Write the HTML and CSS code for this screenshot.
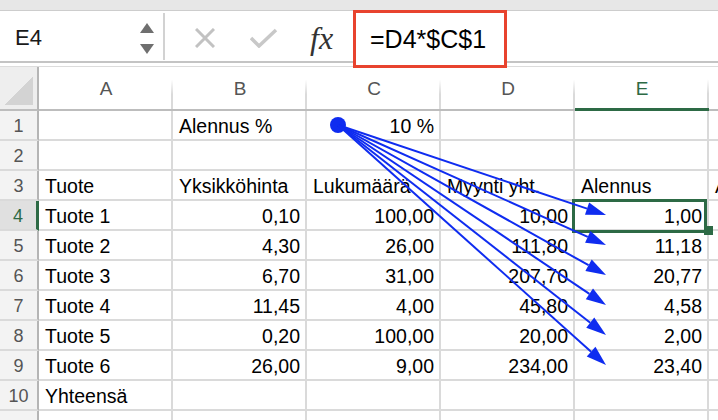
FILE: index.html
```html
<!DOCTYPE html>
<html lang="fi">
<head>
    <meta charset="UTF-8">
    <meta name="viewport" content="width=device-width, initial-scale=1.0">
    <title>Alennus</title>
    <link rel="stylesheet" href="styles.css">
</head>
<body>
<div class="page">
    <div class="top-strip"></div>

    <div class="formula-bar">
        <div class="name-box">
            <span>E4</span>
            <span class="spinner">
                <svg width="14" height="10" viewBox="0 0 14 10"><polygon points="7,0 14,10 0,10" fill="#6f6f6f"/></svg>
                <svg width="14" height="10" viewBox="0 0 14 10"><polygon points="0,0 14,0 7,10" fill="#6f6f6f"/></svg>
            </span>
        </div>
        <div class="sep"></div>
        <svg class="btn-cancel" width="20" height="20" viewBox="0 0 20 20">
            <path d="M1 1 L19 19 M19 1 L1 19" stroke="#c2c2c2" stroke-width="3" fill="none"/>
        </svg>
        <svg class="btn-enter" width="28" height="20" viewBox="0 0 28 20">
            <path d="M1 10 L9 18 L26 2" stroke="#c8c8c8" stroke-width="3.5" fill="none"/>
        </svg>
        <span class="fx">fx</span>
        <div class="formula-input">=D4*$C$1</div>
    </div>
    <div class="gap"></div>

    <div class="sheet" id="sheet"></div>

    <svg class="arrows" id="arrows" width="718" height="420"></svg>
</div>

<script>
    const cols = ['A', 'B', 'C', 'D', 'E', 'F'];
    const data = [
        ['', 'Alennus %', '10 %', '', '', ''],
        ['', '', '', '', '', ''],
        ['Tuote', 'Yksikköhinta', 'Lukumäärä', 'Myynti yht.', 'Alennus', 'Alennus %'],
        ['Tuote 1', '0,10', '100,00', '10,00', '1,00', ''],
        ['Tuote 2', '4,30', '26,00', '111,80', '11,18', ''],
        ['Tuote 3', '6,70', '31,00', '207,70', '20,77', ''],
        ['Tuote 4', '11,45', '4,00', '45,80', '4,58', ''],
        ['Tuote 5', '0,20', '100,00', '20,00', '2,00', ''],
        ['Tuote 6', '26,00', '9,00', '234,00', '23,40', ''],
        ['Yhteensä', '', '', '', '', ''],
        ['', '', '', '', '', '']
    ];

    let html = '<div class="corner"><div class="corner-tri"></div></div>';
    cols.forEach(c => {
        html += `<div class="col-head${c === 'E' ? ' active' : ''}">${c === 'F' ? '' : c}</div>`;
    });
    data.forEach((row, i) => {
        const n = i + 1;
        // rivi 11 jää ikkunan alareunan alle, vain viivat näkyvät
        html += `<div class="row-head${n === 4 ? ' active' : ''}">${n <= 10 ? n : ''}</div>`;
        row.forEach((v, j) => {
            const num = v !== '' && /^[\d,\s%]+$/.test(v);
            const sel = n === 4 && j === 4;
            html += `<div class="cell${num ? ' num' : ''}${sel ? ' selected' : ''}">${v}`
                + (sel ? '<div class="selection"><div class="fill-handle"></div></div>' : '')
                + '</div>';
        });
    });
    document.getElementById('sheet').innerHTML = html;

    // jäljitysnuolet C1 -> E4:E9
    const from = { x: 338, y: 125 };
    const headLen = 20, headHalf = 6.5;
    let svg = `<circle cx="${from.x}" cy="${from.y}" r="8" fill="#0f2cf0"/>`;
    for (let k = 0; k < 6; k++) {
        const tip = { x: 606, y: 215 + 30 * k };
        const dx = tip.x - from.x, dy = tip.y - from.y;
        const len = Math.hypot(dx, dy);
        const ux = dx / len, uy = dy / len;
        const bx = tip.x - headLen * ux, by = tip.y - headLen * uy;
        svg += `<line x1="${from.x}" y1="${from.y}" x2="${bx}" y2="${by}" stroke="#0f2cf0" stroke-width="2"/>`;
        svg += `<polygon points="${tip.x},${tip.y} ${bx - headHalf * uy},${by + headHalf * ux} ${bx + headHalf * uy},${by - headHalf * ux}" fill="#0f2cf0"/>`;
    }
    document.getElementById('arrows').innerHTML = svg;
</script>
</body>
</html>
```

FILE: styles.css
```css
body {
    margin: 0;
    font-family: "Liberation Sans", Arial, sans-serif;
    background: #fff;
    overflow: hidden;
}
.page {
    position: relative;
    width: 718px;
    height: 420px;
    overflow: hidden;
}
.top-strip {
    height: 10px;
    background: #e7e7e7;
    border-bottom: 1px solid #cdcdcd;
}
.formula-bar {
    display: flex;
    align-items: center;
    height: 52px;
    box-sizing: border-box;
    padding-top: 4px;
    border-bottom: 2px solid #c4c4c4;
}
.name-box {
    width: 163px;
    height: 100%;
    box-sizing: border-box;
    display: flex;
    align-items: center;
    justify-content: space-between;
    padding: 0 9px 0 15px;
    font-size: 22px;
    color: #1a1a1a;
}
.spinner {
    display: flex;
    flex-direction: column;
    gap: 11px;
}
.spinner svg {
    display: block;
}
.sep {
    width: 2px;
    align-self: stretch;
    margin: -2px 0 1px;
    background: #d2d2d2;
}
.btn-cancel {
    margin-left: 30px;
}
.btn-enter {
    margin-left: 35px;
}
.fx {
    margin-left: 32px;
    width: 30px;
    font: italic 32px "Liberation Serif", "Times New Roman", serif;
    color: #333;
}
.formula-input {
    align-self: flex-start;
    margin-top: -5px;
    margin-left: 13px;
    width: 154px;
    height: 58px;
    box-sizing: border-box;
    border: 3px solid #e8432e;
    padding-left: 14px;
    font-size: 25px;
    line-height: 52px;
    color: #000;
    background: #fff;
    position: relative;
    z-index: 2;
}
.gap {
    height: 3px;
}
.sheet {
    display: grid;
    grid-template-columns: 39px repeat(6, 134px);
    grid-template-rows: 44px;
    grid-auto-rows: 30px;
    border-top: 1px solid #dcdcdc;
}
.corner {
    display: flex;
    justify-content: flex-end;
    align-items: flex-end;
    padding: 0 4px 4px 0;
    background: #eeeeee;
    border-right: 2px solid #b5b5b5;
    border-bottom: 2px solid #bdbdbd;
}
.corner-tri {
    width: 29px;
    height: 29px;
    background: linear-gradient(to top left, #d3d3d3 50%, transparent 50%);
}
.col-head {
    box-sizing: border-box;
    padding-top: 12px;
    line-height: 20px;
    text-align: center;
    font-size: 19px;
    color: #555;
    border-bottom: 2px solid #bdbdbd;
    background: linear-gradient(to bottom, rgba(218, 218, 218, 0) 30%, #dadada 65%) right top / 2px 100% no-repeat;
}
.col-head.active {
    color: #2d6a45;
    border-bottom: 3px solid #2d6a45;
}
.row-head {
    background: #f3f3f3;
    border-right: 2px solid #b5b5b5;
    border-bottom: 2px solid #dadada;
    text-align: center;
    font-size: 18px;
    color: #555;
    padding-top: 3px;
    line-height: 25px;
}
.row-head.active {
    background: #e0e0e0;
    color: #2d6a45;
    border-right: 3px solid #2d6a45;
}
.cell {
    border-right: 2px solid #dadada;
    border-bottom: 2px solid #dadada;
    padding: 3px 5px 0 6px;
    font-size: 19.5px;
    line-height: 25px;
    white-space: nowrap;
    color: #000;
}
.cell.num {
    text-align: right;
}
.cell.selected {
    position: relative;
}
.selection {
    position: absolute;
    left: -3px;
    top: -2px;
    right: 0;
    bottom: -4px;
    border: 3px solid #2d6a45;
}
.fill-handle {
    position: absolute;
    right: -9px;
    bottom: -5px;
    width: 9px;
    height: 9px;
    background: #2d6a45;
}
.arrows {
    position: absolute;
    left: 0;
    top: 0;
    pointer-events: none;
    z-index: 3;
}
```
